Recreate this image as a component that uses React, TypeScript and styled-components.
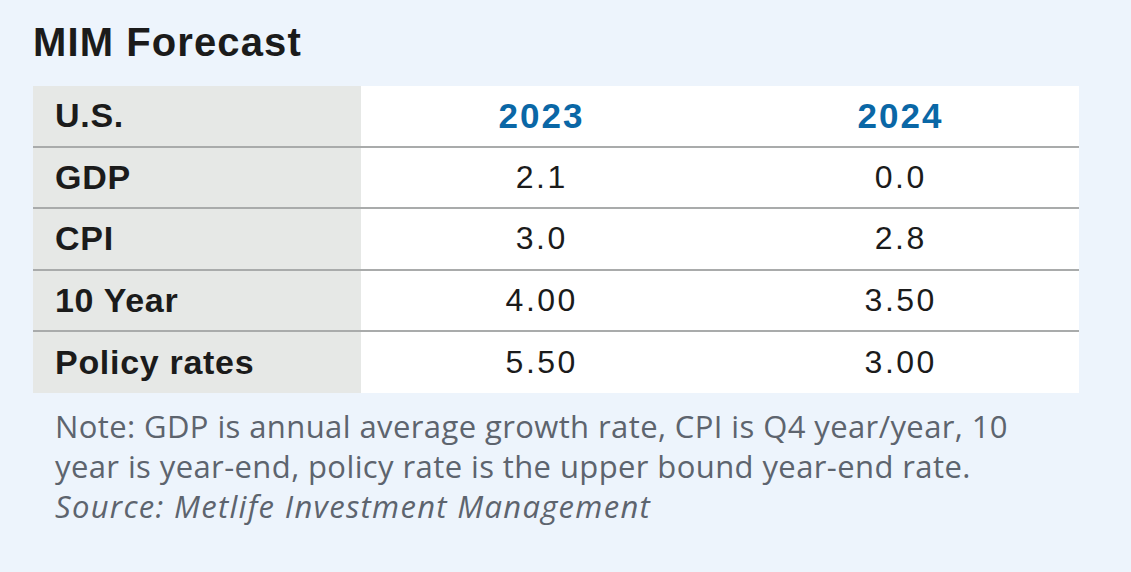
import React from 'react';
import styled, { createGlobalStyle } from 'styled-components';

const GlobalStyle = createGlobalStyle`
  html, body {
    margin: 0;
    padding: 0;
    background: #edf4fc;
  }
  body {
    width: 1131px;
    height: 572px;
    overflow: hidden;
  }
`;

const Page = styled.div`
  padding: 18px 52px 0 33px;
  font-family: 'Liberation Sans', Arial, sans-serif;
  color: #1b1b1b;
`;

const Title = styled.h1`
  margin: 0;
  font-family: 'Liberation Sans', Arial, sans-serif;
  font-size: 40px;
  font-weight: 700;
  line-height: 48px;
  height: 68px;
  letter-spacing: 1.1px;
`;

const Table = styled.div`
  display: grid;
  grid-template-columns: 328px 359px 359px;
  background: #ffffff;
`;

const Cell = styled.div<{ $label?: boolean; $head?: boolean; $last?: boolean }>`
  display: flex;
  align-items: center;
  justify-content: ${(p) => (p.$label ? 'flex-start' : 'center')};
  height: ${(p) => (p.$last ? '61px' : '61.5px')};
  box-sizing: border-box;
  padding-left: ${(p) => (p.$label ? '22px' : '0')};
  background: ${(p) => (p.$label ? '#e6e8e6' : '#ffffff')};
  border-bottom: ${(p) => (p.$last ? 'none' : '2px solid #a9abab')};
  font-size: ${(p) => (p.$label ? '34px' : p.$head ? '35px' : '32px')};
  font-weight: ${(p) => (p.$label || p.$head ? 700 : 400)};
  color: ${(p) => (p.$head ? '#0a67a6' : '#1b1b1b')};
  letter-spacing: ${(p) => (p.$label ? '0.7px' : p.$head ? '2px' : '2.5px')};
  text-indent: ${(p) => (p.$label ? '0' : p.$head ? '2px' : '2.5px')};
`;

const Note = styled.p`
  margin: 0;
  padding: 13px 0 0 22px;
  font-family: 'Open Sans', 'Noto Sans', sans-serif;
  font-size: 31px;
  line-height: 40px;
  letter-spacing: 0.4px;
  color: #5d646e;
`;

const Source = styled.em`
  font-style: italic;
  letter-spacing: 1.3px;
`;

const rows = [
  ['GDP', '2.1', '0.0'],
  ['CPI', '3.0', '2.8'],
  ['10 Year', '4.00', '3.50'],
  ['Policy rates', '5.50', '3.00'],
];

export default function App() {
  return (
    <>
      <GlobalStyle />
      <Page>
        <Title>MIM Forecast</Title>
        <Table>
          <Cell $label>U.S.</Cell>
          <Cell $head>2023</Cell>
          <Cell $head>2024</Cell>
          {rows.map((r, i) => {
            const last = i === rows.length - 1;
            return (
              <React.Fragment key={r[0]}>
                <Cell $label $last={last}>{r[0]}</Cell>
                <Cell $last={last}>{r[1]}</Cell>
                <Cell $last={last}>{r[2]}</Cell>
              </React.Fragment>
            );
          })}
        </Table>
        <Note>
          Note: GDP is annual average growth rate, CPI is Q4 year/year, 10
          <br />
          year is year-end, policy rate is the upper bound year-end rate.
          <br />
          <Source>Source: Metlife Investment Management</Source>
        </Note>
      </Page>
    </>
  );
}
